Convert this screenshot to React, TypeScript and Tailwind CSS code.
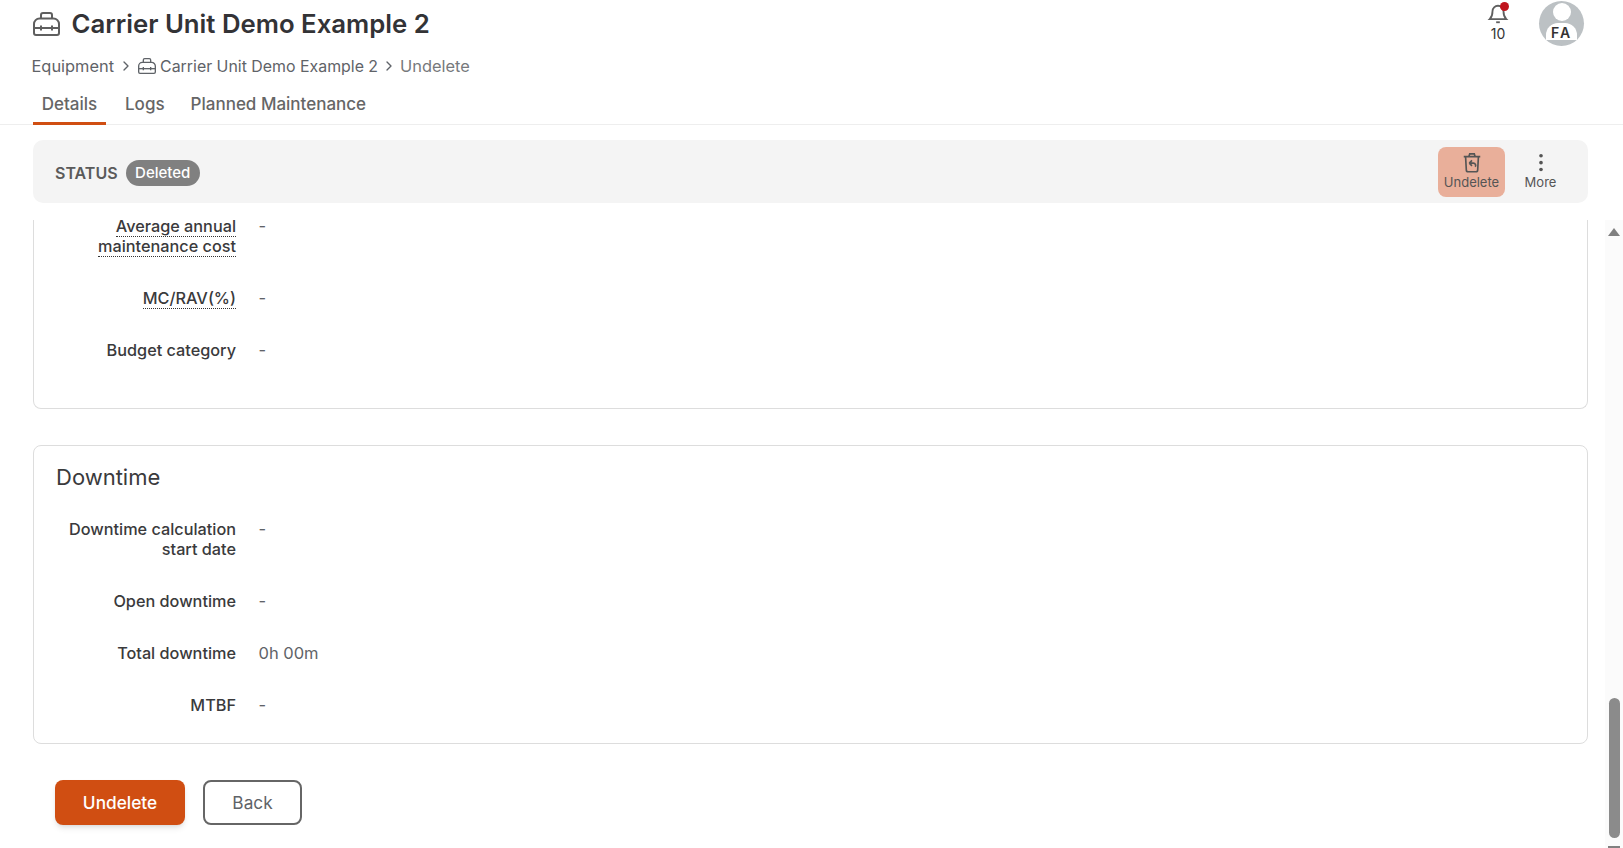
import { ChevronRight } from "lucide-react";

const font = { fontFamily: "Inter, sans-serif" };

const ToolboxIcon = ({ className }: { className?: string }) => (
  <svg viewBox="0 0 27 24" fill="none" stroke="currentColor" strokeWidth="2" className={className}>
    <path d="M8 6.5V3a2 2 0 0 1 2-2h7a2 2 0 0 1 2 2v3.5" />
    <path d="M1 12a5.5 5.5 0 0 1 5.5-5.5h14A5.5 5.5 0 0 1 26 12v9a2 2 0 0 1-2 2H3a2 2 0 0 1-2-2z" />
    <path d="M1 16h25" />
    <path d="M8 13.5v5M19 13.5v5" />
  </svg>
);

const Row = ({
  label,
  value = "-",
  dotted,
  className,
}: {
  label: string[];
  value?: string;
  dotted?: boolean;
  className?: string;
}) => (
  <div className={`flex items-start ${className ?? ""}`}>
    <div className="w-[202px] shrink-0 text-right text-[16.25px] leading-[20px] font-medium text-[#3a3a3c]">
      {label.map((l) => (
        <div key={l}>
          <span className={dotted ? "border-b border-dotted border-[#333]" : ""}>{l}</span>
        </div>
      ))}
    </div>
    <div className="ml-[22.5px] text-[16.5px] leading-[20px] text-[#5f6368]">{value}</div>
  </div>
);

export default function App() {
  return (
    <div className="flex h-screen flex-col overflow-hidden bg-white text-[#333]" style={font}>
      <header className="relative h-[125px] shrink-0 border-b border-[#eeeeee]">
        <div className="flex h-[48px] items-center pl-[33px]">
          <ToolboxIcon className="h-[24px] w-[27px] text-[#5f5f5f]" />
          <h1 className="ml-[11.5px] text-[25.75px] font-semibold text-[#333336]">Carrier Unit Demo Example 2</h1>
        </div>
        <nav className="flex h-[36px] items-center pl-[31.5px] text-[16.4px] text-[#5f6368]">
          <span>Equipment</span>
          <ChevronRight className="mx-[4px] h-[16px] w-[16px]" />
          <ToolboxIcon className="mr-[4px] h-[16px] w-[18px]" />
          <span className="mt-[1px] text-[15.9px]">Carrier Unit Demo Example 2</span>
          <ChevronRight className="mx-[3px] h-[16px] w-[16px]" />
          <span className="text-[#77797c]">Undelete</span>
        </nav>
        <div className="flex pl-[33px] text-[17px] font-medium text-[#666666]">
          <div className="h-[41px] w-[73px] border-b-[3px] border-[#d04e12] pt-[8px] text-center">Details</div>
          <div className="ml-[19px] pt-[8px]">Logs</div>
          <div className="ml-[26px] pt-[8px]">Planned Maintenance</div>
        </div>
        <div className="absolute right-[114px] top-[3px] flex flex-col items-center">
          <div className="relative">
            <svg viewBox="0 0 24 24" fill="none" stroke="#5f5f5f" strokeWidth="2" className="h-[22px] w-[22px]">
              <path d="M6 9a6 6 0 0 1 12 0c0 6 2.5 8 3 8.5H3C3.5 17 6 15 6 9" />
              <path d="M10 21h4" />
            </svg>
            <span className="absolute right-[0px] top-[-1px] h-[9px] w-[9px] rounded-full bg-[#c0141c]" />
          </div>
          <span className="mt-[2px] text-[14px] leading-[14px] text-[#333]">10</span>
        </div>
        <div className="absolute right-[39px] top-[1px] h-[45px] w-[45px] overflow-hidden rounded-full bg-[#bcc1c4]">
          <div className="mx-auto mt-[2px] h-[18px] w-[18px] rounded-full bg-white" />
          <div className="mx-auto mt-[2px] h-[17px] w-[31px] rounded-t-[12px] bg-white text-center text-[14px] leading-[19px] font-semibold tracking-[2px] text-[#333]">
            FA
          </div>
        </div>
      </header>

      <div className="flex shrink-0 pl-[33px] pr-[35px] pt-[15px]">
        <div className="flex h-[63px] w-full items-center rounded-[10px] bg-[#f4f4f4] pl-[22px] pr-[12px]">
          <span className="pt-[2px] text-[16px] font-semibold text-[#5a5a5a]">STATUS</span>
          <span className="ml-[8px] mt-[2px] flex h-[26px] items-center rounded-full bg-[#808080] px-[9.5px] pt-[1px] text-[15px] font-medium text-white">
            Deleted
          </span>
          <div className="ml-auto flex items-center">
            <div className="flex h-[50px] w-[67px] flex-col items-center justify-center rounded-[8px] bg-[#e9af9a] text-[#555]">
              <svg viewBox="0 1.5 24 24" fill="none" stroke="currentColor" strokeWidth="1.8" className="h-[22px] w-[22px]">
                <path d="M3 5.5h18M8.5 5.5 9.5 2.5h5l1 3" />
                <path d="M5 5.5l.8 14.5a2 2 0 0 0 2 2h8.4a2 2 0 0 0 2-2L19 5.5" />
                <path d="M9 12.5l3-3M9 12.5l3 3M9 12.5h4.5a2.5 2.5 0 0 1 2 4" />
              </svg>
              <span className="text-[13px] leading-[15px]">Undelete</span>
            </div>
            <div className="flex h-[50px] w-[71px] flex-col items-center justify-center text-[#555]">
              <svg viewBox="0 1.5 24 24" fill="currentColor" className="h-[22px] w-[22px]">
                <circle cx="12" cy="4.5" r="2" />
                <circle cx="12" cy="12" r="2" />
                <circle cx="12" cy="19.5" r="2" />
              </svg>
              <span className="text-[13px] leading-[15px]">More</span>
            </div>
          </div>
        </div>
      </div>

      <div className="mt-[17px] flex min-h-0 flex-1">
        <main className="min-w-0 flex-1 pl-[33px] pr-[17px]">
          <section className="flow-root h-[189px] rounded-b-[8px] border border-t-0 border-[#dddddd]">
            <Row label={["Average annual", "maintenance cost"]} dotted className="mt-[-4px]" />
            <Row label={["MC/RAV(%)"]} dotted className="mt-[32px]" />
            <Row label={["Budget category"]} className="mt-[32px]" />
          </section>
          <section className="mt-[36px] h-[299px] rounded-[8px] border border-[#dddddd]">
            <h2 className="ml-[22px] mt-[17px] text-[22px] leading-[28px] text-[#3a3a3c]">Downtime</h2>
            <Row label={["Downtime calculation", "start date"]} className="mt-[28px]" />
            <Row label={["Open downtime"]} className="mt-[32px]" />
            <Row label={["Total downtime"]} value="0h 00m" className="mt-[32px]" />
            <Row label={["MTBF"]} className="mt-[32px]" />
          </section>
          <div className="mt-[36px] flex pl-[22px]">
            <button className="h-[45px] w-[130px] rounded-[8px] bg-[#d04e12] pt-[1px] text-[17.25px] font-medium text-white shadow-md">
              Undelete
            </button>
            <button className="ml-[18px] h-[45px] w-[99px] rounded-[8px] border-2 border-[#666666] text-[17.25px] text-[#5f6368]">
              Back
            </button>
          </div>
        </main>
        <aside className="flex w-[18px] shrink-0 flex-col items-center bg-[#fbfbfb]">
          <div className="mt-[8px] h-0 w-0 border-x-[6px] border-b-[8px] border-x-transparent border-b-[#808080]" />
          <div className="mt-[462px] h-[140px] w-[11px] rounded-full bg-[#8b8b8b]" />
          <div className="mt-[8px] h-[2px] w-[12px] bg-[#808080]" />
        </aside>
      </div>
    </div>
  );
}
